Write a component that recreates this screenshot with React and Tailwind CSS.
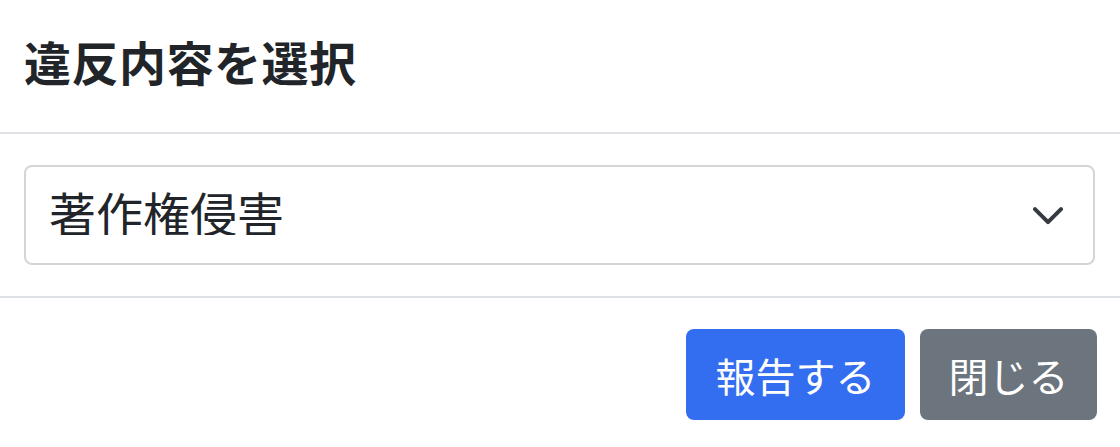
import React, { useState } from 'react';

export default function App() {
  const [reason, setReason] = useState('copyright');

  return (
    <div
      className="w-[1120px] h-[447px] bg-white text-[#212529] overflow-hidden"
      style={{ fontFamily: '"Noto Sans CJK JP", "Noto Sans", sans-serif' }}
    >
      {/* Header */}
      <div className="h-[134px] flex items-center px-[24px] border-b-2 border-[#dee2e6]">
        <h5 className="text-[47px] font-bold leading-none tracking-[0.5px] mb-[12px]">違反内容を選択</h5>
      </div>

      {/* Body */}
      <div className="px-[24px] py-[31px]">
        <div className="relative h-[100px]">
          <select
            value={reason}
            onChange={(e) => setReason(e.target.value)}
            className="appearance-none w-[1071px] h-[100px] border-2 border-[#d3d5d8] rounded-[8px] pl-[23px] pr-[80px] pb-[8px] text-[47px] leading-none text-[#212529] bg-white outline-none"
          >
            <option value="copyright">著作権侵害</option>
            <option value="spam">スパム</option>
            <option value="other">その他</option>
          </select>
          <svg
            className="absolute left-[1005px] top-[31px] pointer-events-none"
            width="38"
            height="38"
            viewBox="0 0 16 16"
            fill="none"
          >
            <path d="m2.5 5.5 5.5 5.5 5.5-5.5" stroke="#343a40" strokeWidth="1.7" strokeLinecap="round" strokeLinejoin="round" />
          </svg>
        </div>
      </div>

      {/* Footer */}
      <div className="border-t-2 border-[#dee2e6] flex justify-end gap-[15px] pt-[31px] pr-[23px]">
        <button className="h-[91px] w-[219px] rounded-[8px] bg-[#346ef0] text-white text-[40px] leading-none flex items-center justify-center">
          報告する
        </button>
        <button className="h-[91px] w-[177px] rounded-[8px] bg-[#6c757d] text-white text-[40px] leading-none flex items-center justify-center">
          閉じる
        </button>
      </div>
    </div>
  );
}
